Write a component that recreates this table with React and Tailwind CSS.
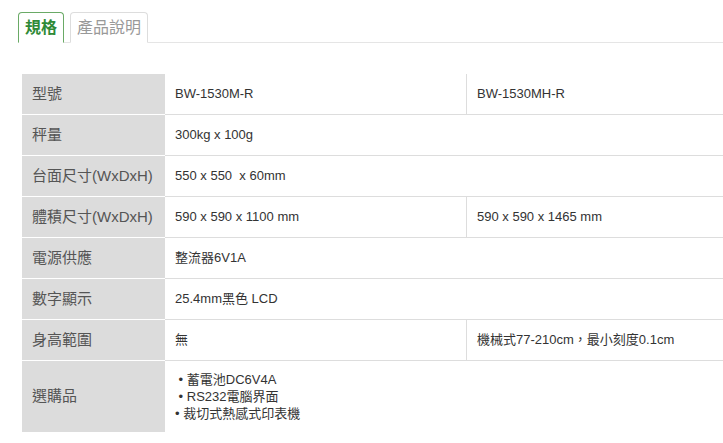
const rows = [
	{ label: "型號", values: ["BW-1530M-R", "BW-1530MH-R"] },
	{ label: "秤量", values: ["300kg x 100g"] },
	{ label: "台面尺寸(WxDxH)", values: ["550 x 550  x 60mm"] },
	{ label: "體積尺寸(WxDxH)", values: ["590 x 590 x 1100 mm", "590 x 590 x 1465 mm"] },
	{ label: "電源供應", values: ["整流器6V1A"] },
	{ label: "數字顯示", values: ["25.4mm黑色 LCD"] },
	{ label: "身高範圍", values: ["無", "機械式77-210cm，最小刻度0.1cm"] },
];

const options = [" • 蓄電池DC6V4A", " • RS232電腦界面", "• 裁切式熱感式印表機"];

export default function App() {
	return (
		<div
			className="w-[723px] h-[443px] overflow-hidden bg-white"
			style={{ fontFamily: '"Liberation Sans", Arial, "Noto Sans CJK TC", sans-serif' }}
		>
			{/* tabs */}
			<div className="pt-3 pl-[18px]">
				<div className="flex gap-[6px] border-b border-[#e5e5e5]">
					<div className="-mb-px h-[31px] px-[6px] flex items-center rounded-t border border-b-white border-[#6aaa66] bg-white text-[16px] font-bold text-[#2f8a37]">
						規格
					</div>
					<div className="-mb-px h-[31px] px-[6px] flex items-center rounded-t border border-b-white border-[#dddddd] bg-white text-[16px] text-[#999999]">
						產品說明
					</div>
				</div>
			</div>

			{/* spec table */}
			<div className="mt-[31px] ml-[22px] w-[760px]">
				{rows.map((row) => (
					<div key={row.label} className="flex h-[41px]">
						<div className="w-[143px] shrink-0 flex items-center pl-[10px] bg-[#dcdcdc] border-b border-white text-[15px] text-[#555555]">
							{row.label}
						</div>
						{row.values.length === 2 ? (
							<>
								<div className="w-[301px] shrink-0 flex items-center pl-[10px] border-b border-[#dddddd] text-[13px] text-[#333333]">
									{row.values[0]}
								</div>
								<div className="flex-1 flex items-center pl-[10px] border-b border-l border-[#dddddd] text-[13px] text-[#333333]">
									{row.values[1]}
								</div>
							</>
						) : (
							<div className="flex-1 flex items-center pl-[10px] border-b border-[#dddddd] text-[13px] text-[#333333] whitespace-pre">
								{row.values[0]}
							</div>
						)}
					</div>
				))}
				<div className="flex h-[71px]">
					<div className="w-[143px] shrink-0 flex items-center pl-[10px] bg-[#dcdcdc] text-[15px] text-[#555555]">
						選購品
					</div>
					<div className="flex-1 flex flex-col justify-center pl-[10px] text-[13px] leading-[17px] text-[#333333]">
						{options.map((o) => (
							<div key={o} className="whitespace-pre">
								{o}
							</div>
						))}
					</div>
				</div>
			</div>
		</div>
	);
}
